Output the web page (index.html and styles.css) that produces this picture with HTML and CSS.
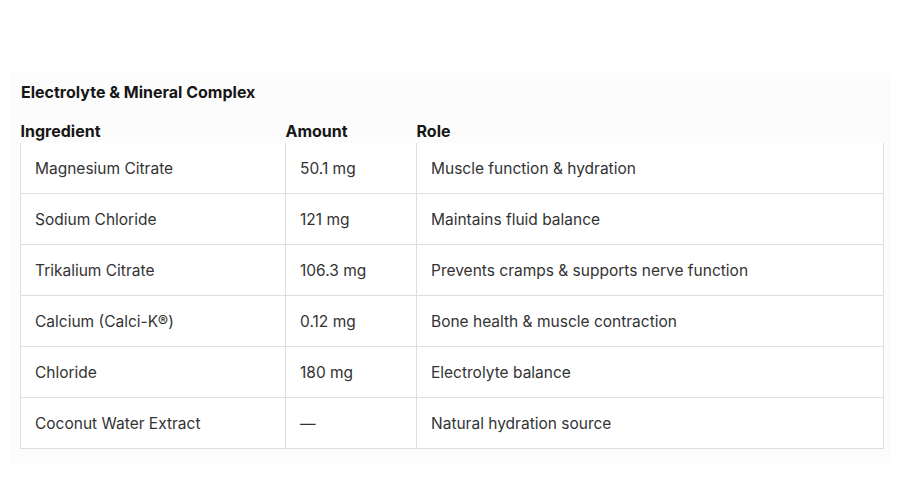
FILE: index.html
```html
<!DOCTYPE html>
<html lang="en">
<head>
<meta charset="utf-8">
<title>Electrolyte &amp; Mineral Complex</title>
<link rel="stylesheet" href="styles.css">
</head>
<body>
<section class="panel">
  <h2 class="title">Electrolyte &amp; Mineral Complex</h2>
  <table class="facts">
    <colgroup>
      <col class="c1"><col class="c2"><col class="c3">
    </colgroup>
    <thead>
      <tr><th>Ingredient</th><th>Amount</th><th>Role</th></tr>
    </thead>
    <tbody>
      <tr><td>Magnesium Citrate</td><td>50.1 mg</td><td>Muscle function &amp; hydration</td></tr>
      <tr><td>Sodium Chloride</td><td>121 mg</td><td>Maintains fluid balance</td></tr>
      <tr><td>Trikalium Citrate</td><td>106.3 mg</td><td>Prevents cramps &amp; supports nerve function</td></tr>
      <tr><td>Calcium (Calci-K®)</td><td>0.12 mg</td><td>Bone health &amp; muscle contraction</td></tr>
      <tr><td>Chloride</td><td>180 mg</td><td>Electrolyte balance</td></tr>
      <tr><td>Coconut Water Extract</td><td>—</td><td>Natural hydration source</td></tr>
    </tbody>
  </table>
</section>
</body>
</html>
```

FILE: styles.css
```css
html, body {
  margin: 0;
  padding: 0;
  background: #ffffff;
}
body {
  font-family: Inter, "Open Sans", "Liberation Sans", sans-serif;
  color: #2b2b2b;
}
.panel {
  margin: 73px 6px 0 10px;
  padding: 9px 8px 14px 10px;
  background: #fcfcfc;
}
.title {
  margin: 0 0 17px 1px;
  font-size: 16px;
  line-height: 20px;
  font-weight: 700;
  color: #161616;
}
.facts {
  width: 863px;
  border-collapse: collapse;
  table-layout: fixed;
}
.c1 { width: 265px; }
.c2 { width: 131px; }
.c3 { width: 467px; }
.facts th {
  text-align: left;
  font-size: 16px;
  font-weight: 700;
  color: #161616;
  padding: 2px 0 0 0;
  height: 24px;
  line-height: 20px;
  vertical-align: top;
  box-sizing: border-box;
}
.facts td {
  border: 1px solid #dedede;
  border-top: none;
  padding: 1px 14px 0;
  height: 49px;
  font-size: 15.5px;
  line-height: 20px;
  color: #333333;
  background: #ffffff;
}
```
